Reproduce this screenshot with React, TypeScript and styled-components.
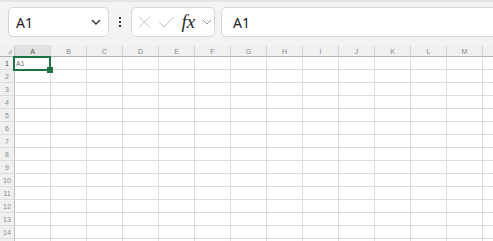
import React from "react";
import styled, { createGlobalStyle } from "styled-components";

const COLUMNS = ["A", "B", "C", "D", "E", "F", "G", "H", "I", "J", "K", "L", "M", "N"];
const ROWS = Array.from({ length: 15 }, (_, i) => i + 1);

const GlobalStyle = createGlobalStyle`
  html, body {
    margin: 0;
    padding: 0;
    background: #f3f3f3;
  }
  body {
    font-family: "Noto Sans", "Liberation Sans", sans-serif;
  }
`;

const App = () => {
  return (
    <>
      <GlobalStyle />
      <StPage>
        <StToolbar>
          <StNameBox>
            <span>A1</span>
            <svg width="10" height="6" viewBox="0 0 10 6">
              <path d="M1 1 L5 5 L9 1" fill="none" stroke="#333" strokeWidth="1.4" />
            </svg>
          </StNameBox>
          <StDots>
            <svg width="4" height="12" viewBox="0 0 4 12">
              <rect x="1" y="1" width="2" height="2" fill="#333" />
              <rect x="1" y="5" width="2" height="2" fill="#333" />
              <rect x="1" y="9" width="2" height="2" fill="#333" />
            </svg>
          </StDots>
          <StFormulaButtons>
            <svg width="13" height="12" viewBox="0 0 13 12">
              <path d="M1 0.5 L12 11.5 M12 0.5 L1 11.5" stroke="#c4c4c4" strokeWidth="1" fill="none" />
            </svg>
            <svg width="17" height="12" viewBox="0 0 17 12">
              <path d="M1 6 L6 11 L16 1" stroke="#c4c4c4" strokeWidth="1" fill="none" />
            </svg>
            <StFx>fx</StFx>
            <svg width="10" height="6" viewBox="0 0 10 6">
              <path d="M1 1 L5 5 L9 1" fill="none" stroke="#9a9a9a" strokeWidth="1" />
            </svg>
          </StFormulaButtons>
          <StFormulaInput>A1</StFormulaInput>
        </StToolbar>

        <StSheet>
          <StCorner>
            <svg width="5" height="5" viewBox="0 0 5 5">
              <path d="M5 0 L5 5 L0 5 Z" fill="#c6c6c6" />
            </svg>
          </StCorner>
          {COLUMNS.map((col) => (
            <StColHeader key={col} $active={col === "A"}>
              {col}
            </StColHeader>
          ))}
          {ROWS.map((row) => (
            <React.Fragment key={row}>
              <StRowHeader $active={row === 1}>{row}</StRowHeader>
              {COLUMNS.map((col) => (
                <StCell key={col + row}>{col === "A" && row === 1 ? "A1" : ""}</StCell>
              ))}
            </React.Fragment>
          ))}
          <StSelection>
            <StFillHandle />
          </StSelection>
        </StSheet>
      </StPage>
    </>
  );
};

export default App;

const StPage = styled.div`
  width: 493px;
  height: 241px;
  overflow: hidden;
  background: #f3f3f3;
  border-top: 2px solid #e4e4e4;
  box-sizing: border-box;
`;

const StToolbar = styled.div`
  display: flex;
  align-items: center;
  height: 30px;
  padding: 5px 0 8px 8px;
`;

const StBox = styled.div`
  box-sizing: border-box;
  height: 30px;
  background: #fff;
  border: 1px solid #d6d6d6;
  border-radius: 5px;
  display: flex;
  align-items: center;
`;

const StNameBox = styled(StBox)`
  width: 101px;
  padding: 0 7px 0 7px;
  justify-content: space-between;
  font-size: 14px;
  color: #222;
`;

const StDots = styled.div`
  width: 22px;
  display: flex;
  justify-content: center;
  align-items: center;
`;

const StFormulaButtons = styled(StBox)`
  width: 84px;
  padding: 0 2px 0 5px;
  justify-content: space-between;

  svg:first-child {
    margin-left: 1px;
  }
`;

const StFx = styled.span`
  font-family: "Liberation Serif", serif;
  font-style: italic;
  font-size: 19px;
  color: #2a2a2a;
  line-height: 1;
  margin-top: -2px;
`;

const StFormulaInput = styled(StBox)`
  flex: 1;
  margin-left: 6px;
  margin-right: -10px;
  padding-left: 11px;
  font-size: 14px;
  color: #222;
`;

const StSheet = styled.div`
  position: relative;
  display: grid;
  grid-template-columns: 15px repeat(14, 36px);
  grid-template-rows: 12px;
  grid-auto-rows: 13px;
  background: #fff;
  font-family: "Liberation Sans", sans-serif;
  font-size: 7px;
`;

const StHeaderCell = styled.div`
  box-sizing: border-box;
  background: #f0f0f0;
  display: flex;
  align-items: center;
  justify-content: center;
  color: #777;
`;

const StCorner = styled(StHeaderCell)`
  border-right: 1px solid #c8c8c8;
  border-bottom: 1px solid #b4b4b4;
  align-items: flex-end;
  justify-content: flex-end;
  padding: 0 2px 2px 0;
`;

const StColHeader = styled(StHeaderCell)<{ $active: boolean }>`
  background: ${({ $active }) => ($active ? "#e1e1e1" : "#f0f0f0")};
  border-right: 1px solid #d6d6d6;
  border-bottom: 1px solid #b4b4b4;
  color: ${({ $active }) => ($active ? "#555" : "#888")};
  padding-top: 1px;
`;

const StRowHeader = styled(StHeaderCell)<{ $active: boolean }>`
  border-right: 1px solid #c0c0c0;
  border-bottom: 1px solid #dcdcdc;
  color: ${({ $active }) => ($active ? "#444" : "#8a8a8a")};
`;

const StCell = styled.div`
  box-sizing: border-box;
  border-right: 1px solid #dcdcdc;
  border-bottom: 1px solid #dcdcdc;
  color: #666;
  padding-left: 1px;
  display: flex;
  align-items: center;
`;

const StSelection = styled.div`
  position: absolute;
  left: 13px;
  top: 11px;
  width: 38px;
  height: 15px;
  box-sizing: border-box;
  border: 2px solid #1e7145;
  pointer-events: none;
`;

const StFillHandle = styled.div`
  position: absolute;
  right: -4px;
  bottom: -4px;
  width: 6px;
  height: 6px;
  background: #1e7145;
`;
